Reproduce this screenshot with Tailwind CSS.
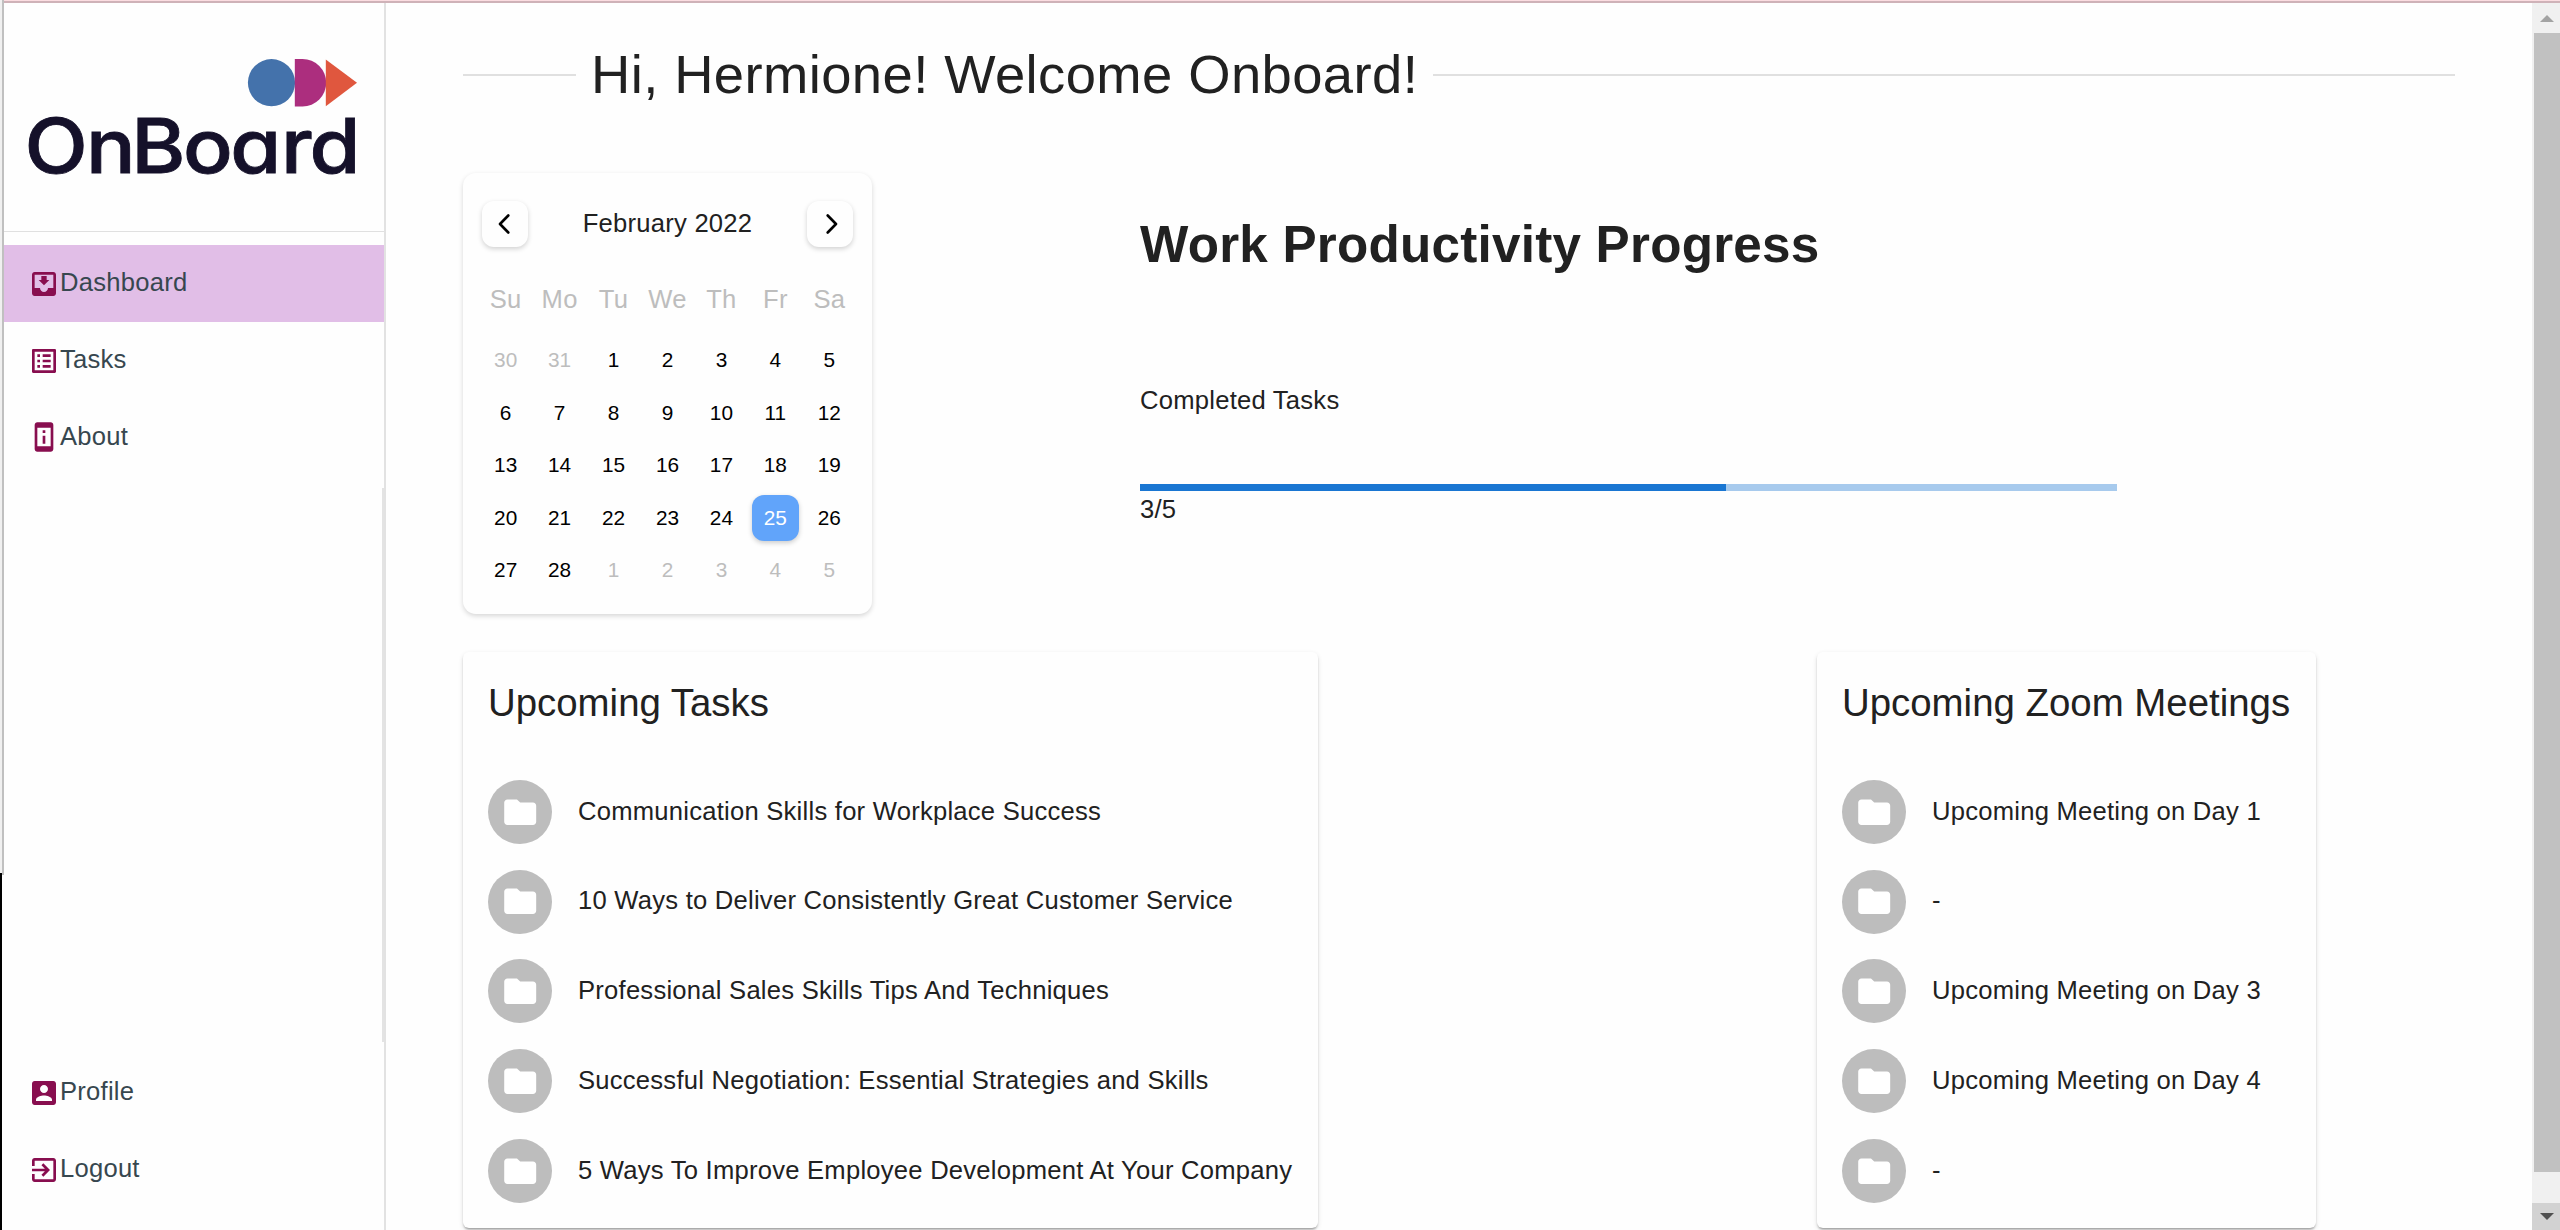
<!DOCTYPE html>
<html lang="en">
<head>
<meta charset="utf-8">
<title>OnBoard</title>
<script src="https://cdn.jsdelivr.net/npm/@tailwindcss/browser@4"></script>
</head>
<body class="w-[2560px] h-[1230px] overflow-hidden bg-[#fefefe] text-[#212121] text-[25.6px] leading-[38.4px] tracking-[0.24px] font-['Liberation_Sans',Arial,sans-serif]">
<svg class="hidden">
  <symbol id="folder" viewBox="0 0 24 24"><path d="M10 4H4c-1.1 0-1.99.9-1.99 2L2 18c0 1.1.9 2 2 2h16c1.1 0 2-.9 2-2V8c0-1.1-.9-2-2-2h-8l-2-2z"/></symbol>
</svg>
<div class="relative flex h-[1230px] pt-[3px]">
  <!-- window edges -->
  <div class="absolute inset-x-0 top-0 h-[3px] bg-[#cfb2b8] border-t border-[#fbdde1] z-10"></div>
  <div class="absolute left-0 top-0 w-1 h-[875px] bg-[#c0c0c0] border-l-2 border-[#f0f0f0] z-10"></div>
  <div class="absolute left-0 top-[873px] w-[2px] h-[357px] bg-black z-10"></div>
  <div class="absolute left-[382px] top-[488px] w-[2px] h-[554px] bg-[#e3e3e3]"></div>

  <aside class="w-[386px] shrink-0 pl-[2px] border-r-2 border-[#e2e2e2] flex flex-col text-[#37474f]">
    <div class="h-[229px] shrink-0 border-b border-[#e0e0e0]">
      <svg class="w-[382px] h-[228px]" viewBox="2 3 382 228">
        <circle cx="271.5" cy="82.7" r="23.6" fill="#4472ab"/>
        <path d="M294.8 59H302.5a23.7 23.7 0 0 1 0 47.5H294.8z" fill="#ac2e7e"/>
        <path d="M325.8 59.5L357 82.7L325.8 106.3z" fill="#e0573e"/>
        <text transform="scale(1.1 1)" y="173.5" x="22.3 78.3 119.3 166.3 209.3 255.5 281.3" font-family="Inter, sans-serif" font-size="75" font-weight="500" letter-spacing="0" fill="#15112a" stroke="#15112a" stroke-width="0.8" style="font-feature-settings:'cv11'">OnBoard</text>
      </svg>
    </div>
    <nav class="pt-[13px] flex flex-col">
      <a class="h-[77px] pl-[26px] flex items-center bg-[#e1bee7]"><svg class="size-8 fill-[#880e4f]" viewBox="0 0 24 24"><path d="M16 9h-2V5.99h-4V9H8l4 4 4-4zm3-6H4.99C3.88 3 3 3.9 3 5v14c0 1.1.88 2 1.99 2H19c1.1 0 2-.9 2-2V5c0-1.1-.9-2-2-2zm0 12h-4c0 1.66-1.35 3-3 3s-3-1.34-3-3H4.99V5H19v10z"/></svg><span class="pb-[3px]">Dashboard</span></a>
      <a class="h-[77px] pl-[26px] flex items-center"><svg class="size-8 fill-[#880e4f]" viewBox="0 0 24 24"><path d="M19 5v14H5V5h14m1.1-2H3.9c-.5 0-.9.4-.9.9v16.2c0 .4.4.9.9.9h16.2c.4 0 .9-.5.9-.9V3.9c0-.5-.5-.9-.9-.9zM11 7h6v2h-6V7zm0 4h6v2h-6v-2zm0 4h6v2h-6zM7 7h2v2H7zm0 4h2v2H7zm0 4h2v2H7z"/></svg><span class="pb-[3px]">Tasks</span></a>
      <a class="h-[76px] pl-[26px] flex items-center"><svg class="size-8 fill-[#880e4f]" viewBox="0 0 24 24"><path d="M13 7h-2v2h2V7zm0 4h-2v6h2v-6zm4-9.99L7 1c-1.1 0-2 .9-2 2v18c0 1.1.9 2 2 2h10c1.1 0 2-.9 2-2V3c0-1.1-.9-1.99-2-1.99zM17 19H7V5h10v14z"/></svg><span class="pb-[2px]">About</span></a>
    </nav>
    <nav class="mt-auto pb-[22px] flex flex-col">
      <a class="h-[77px] pl-[26px] flex items-center"><svg class="size-8 fill-[#880e4f]" viewBox="0 0 24 24"><path d="M3 5v14c0 1.1.89 2 2 2h14c1.1 0 2-.9 2-2V5c0-1.1-.9-2-2-2H5c-1.11 0-2 .9-2 2zm12 4c0 1.66-1.34 3-3 3s-3-1.34-3-3 1.34-3 3-3 3 1.34 3 3zm-9 8c0-2 4-3.1 6-3.1s6 1.1 6 3.1v1H6v-1z"/></svg><span class="pb-[2px]">Profile</span></a>
      <a class="h-[77px] pl-[26px] flex items-center"><svg class="size-8 fill-[#880e4f]" viewBox="0 0 24 24"><path d="M10.09 15.59L11.5 17l5-5-5-5-1.41 1.41L12.67 11H3v2h9.67l-2.58 2.59zM19 3H5c-1.11 0-2 .9-2 2v4h2V5h14v14H5v-4H3v4c0 1.1.89 2 2 2h14c1.1 0 2-.9 2-2V5c0-1.1-.9-2-2-2z"/></svg><span class="pb-[2px]">Logout</span></a>
    </nav>
  </aside>

  <main class="flex-1 pl-[77px] pt-[38px]">
    <h1 class="flex items-center w-[1992px] h-[67px] text-[54.4px] tracking-[0.4px] whitespace-nowrap font-normal">
      <span class="w-[113px] h-[2px] bg-[#e0e0e0] shrink-0"></span>
      <span class="px-[15px] pt-[2px]">Hi, Hermione! Welcome Onboard!</span>
      <span class="flex-1 h-[2px] bg-[#e0e0e0]"></span>
    </h1>

    <div class="flex mt-[65px] h-[441px]">
      <section class="w-[409px] h-[441px] rounded-[13px] shadow-[0_2px_5px_rgba(0,0,0,0.16)] px-[15.7px]">
        <div class="flex items-center justify-between pt-7 px-[3.3px]">
          <button class="size-[46px] rounded-[12px] shadow-[0_2px_5px_rgba(0,0,0,0.18)] flex items-center justify-center"><svg class="w-[12px] h-5 mr-[2px]" viewBox="0 0 12 20" fill="none" stroke="#000" stroke-width="2.6" stroke-linecap="round" stroke-linejoin="round"><path d="M10.3 1.5L2 10L10.3 18.5"/></svg></button>
          <div class="pb-[1px]">February 2022</div>
          <button class="size-[46px] rounded-[12px] shadow-[0_2px_5px_rgba(0,0,0,0.18)] flex items-center justify-center"><svg class="w-[12px] h-5 ml-[3px]" viewBox="0 0 12 20" fill="none" stroke="#000" stroke-width="2.6" stroke-linecap="round" stroke-linejoin="round"><path d="M1.7 1.5L10 10L1.7 18.5"/></svg></button>
        </div>
        <div class="grid grid-cols-7 text-center text-[#bdbdbd] mt-[33px] h-[38px]">
          <span>Su</span><span>Mo</span><span>Tu</span><span>We</span><span>Th</span><span>Fr</span><span>Sa</span>
        </div>
        <div id="days" class="grid grid-cols-7 auto-rows-[52.5px] mt-[16px] justify-items-center items-center text-[20.8px] tracking-normal text-black"></div>
      </section>

      <section class="ml-[268px] w-[977px]">
        <h2 class="mt-[42px] h-[60px] leading-[60px] text-[51.2px] font-bold whitespace-nowrap">Work Productivity Progress</h2>
        <p class="mt-[106px]">Completed Tasks</p>
        <div class="mt-[65px] h-[7px] bg-[#a7caed]"><div class="h-full bg-[#1976d2]" style="width:60%"></div></div>
        <p class="-mt-px">3/5</p>
      </section>
    </div>

    <div class="flex mt-[38px]">
      <section class="w-[855px] h-[576px] rounded-[6px] pl-[25px] shadow-[0_3px_2px_-2px_rgba(0,0,0,0.2),0_2px_2px_rgba(0,0,0,0.14),0_2px_5px_rgba(0,0,0,0.12)]">
        <h3 class="mt-[25px] h-[51px] leading-[51px] text-[38.4px] tracking-normal">Upcoming Tasks</h3>
        <ul id="tasks" class="mt-[39px]"></ul>
      </section>
      <section class="ml-[499px] w-[499px] h-[576px] rounded-[6px] pl-[25px] shadow-[0_3px_2px_-2px_rgba(0,0,0,0.2),0_2px_2px_rgba(0,0,0,0.14),0_2px_5px_rgba(0,0,0,0.12)]">
        <h3 class="mt-[25px] h-[51px] leading-[51px] text-[38.4px] tracking-normal">Upcoming Zoom Meetings</h3>
        <ul id="meetings" class="mt-[39px]"></ul>
      </section>
    </div>
  </main>

  <div class="w-7 bg-[#f0f0f0] flex flex-col shrink-0">
    <div class="h-[30px] flex items-center justify-center pl-[2px]"><svg class="w-[14px] h-[7px]" viewBox="0 0 14 7" fill="#a3a3a3"><path d="M0 7L7 0L14 7z"/></svg></div>
    <div class="ml-[2px] h-[1139px] bg-[#c1c1c1]"></div>
    <div class="mt-auto h-[27px] bg-[#d2d2d2] flex items-center justify-center pl-[2px]"><svg class="w-[14px] h-[7px]" viewBox="0 0 14 7" fill="#505050"><path d="M0 0L7 7L14 0z"/></svg></div>
  </div>
</div>
<script>
const days = [30,31,...Array.from({length:28},(_,i)=>i+1),1,2,3,4,5];
document.getElementById('days').innerHTML = days.map((d,i)=>{
  const other = i < 2 || i > 29;
  const cls = other ? 'text-[#bdbdbd]' : d === 25 ? 'bg-[#61a4fa] text-white shadow-[0_2px_5px_rgba(0,0,0,0.2)]' : '';
  return `<span class="w-[47px] h-[46px] rounded-[12px] flex items-center justify-center ${cls}">${d}</span>`;
}).join('');
const row = t => `<li class="h-[89.8px] flex items-center gap-[26px] whitespace-nowrap"><span class="size-16 rounded-full bg-[#bdbdbd] flex items-center justify-center"><svg class="size-[38.4px] fill-white"><use href="#folder"/></svg></span><span class="pb-[2px]">${t}</span></li>`;
document.getElementById('tasks').innerHTML = ['Communication Skills for Workplace Success','10 Ways to Deliver Consistently Great Customer Service','Professional Sales Skills Tips And Techniques','Successful Negotiation: Essential Strategies and Skills','5 Ways To Improve Employee Development At Your Company'].map(row).join('');
document.getElementById('meetings').innerHTML = ['Upcoming Meeting on Day 1','-','Upcoming Meeting on Day 3','Upcoming Meeting on Day 4','-'].map(row).join('');
</script>
</body>
</html>
